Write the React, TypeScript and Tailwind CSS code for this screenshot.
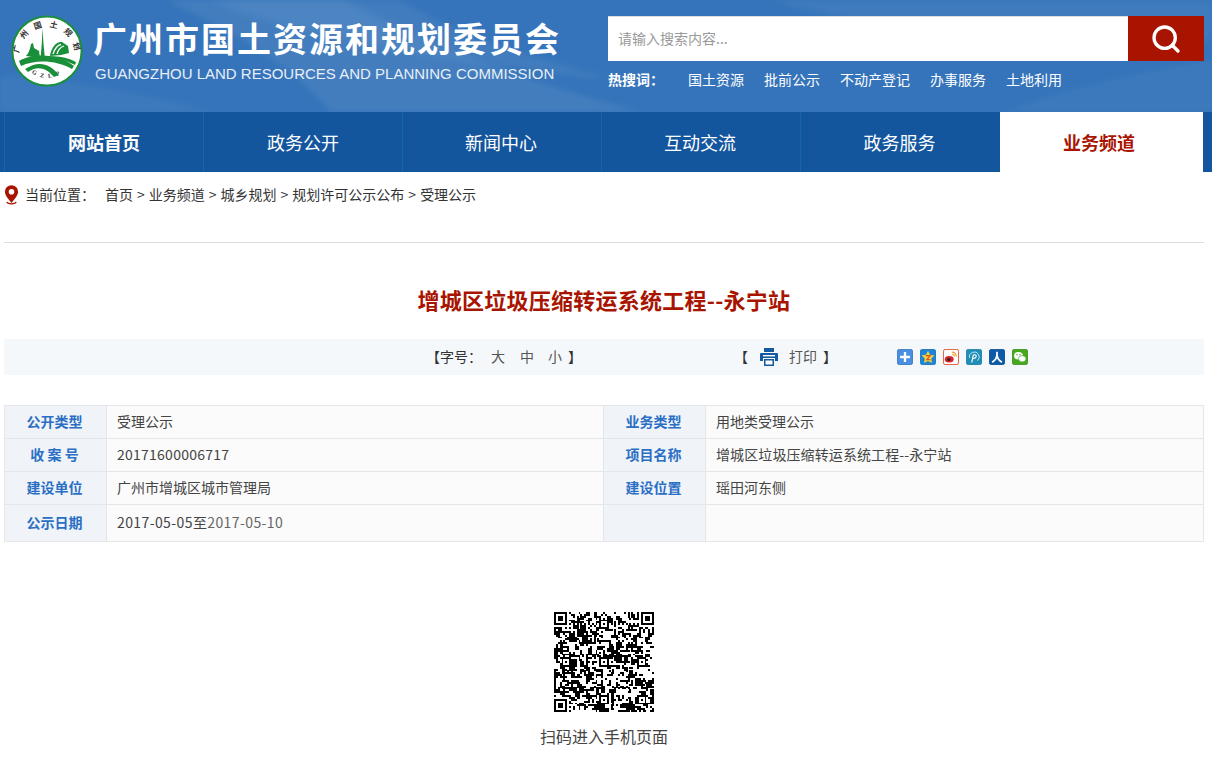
import { Search } from "lucide-react";
import type { ReactNode } from "react";

const cjk = "font-['Noto_Sans_CJK_SC','Liberation_Sans',sans-serif]";

const navItems = ["网站首页", "政务公开", "新闻中心", "互动交流", "政务服务"];
const hotWords = ["国土资源", "批前公示", "不动产登记", "办事服务", "土地利用"];
const crumbs = ["首页", "业务频道", "城乡规划", "规划许可公示公布", "受理公示"];

const QR_SIZE = 53;
const ALIGN = [6, 26, 46];

// seeded noise, a stand-in for the qr modules
const qrCells = () => {
  const cells: { x: number; y: number }[] = [];
  const grid: boolean[][] = [];
  let seed = 20170505;
  const next = () => {
    seed = (seed * 1103515245 + 12345) & 0x7fffffff;
    return (seed >> 16) % 100;
  };
  const inFinder = (x: number, y: number) =>
    (x < 8 && y < 8) || (x >= QR_SIZE - 8 && y < 8) || (x < 8 && y >= QR_SIZE - 8);
  for (let y = 0; y < QR_SIZE; y++) {
    grid[y] = [];
    for (let x = 0; x < QR_SIZE; x++) {
      let on = next() < 50;
      const roll = next();
      if (roll < 25 && x > 0) on = grid[y][x - 1];
      else if (roll < 50 && y > 0) on = grid[y - 1][x];
      if (y === 6) on = x % 2 === 0;
      if (x === 6) on = y % 2 === 0;
      grid[y][x] = on;
      if (!inFinder(x, y) && on) cells.push({ x, y });
    }
  }
  return cells;
};

const Finder = ({ x, y }: { x: number; y: number }) => (
  <g>
    <rect x={x} y={y} width="7" height="7" fill="#000" />
    <rect x={x + 1} y={y + 1} width="5" height="5" fill="#fff" />
    <rect x={x + 2} y={y + 2} width="3" height="3" fill="#000" />
  </g>
);

const QrCode = () => (
  <svg viewBox={`0 0 ${QR_SIZE} ${QR_SIZE}`} className="w-[100px] h-[100px]" shapeRendering="crispEdges">
    <rect width={QR_SIZE} height={QR_SIZE} fill="#fff" />
    {qrCells().map((c) => (
      <rect key={`${c.x}-${c.y}`} x={c.x} y={c.y} width="1.02" height="1.02" fill="#000" />
    ))}
    <Finder x={0} y={0} />
    <Finder x={46} y={0} />
    <Finder x={0} y={46} />
    {ALIGN.flatMap((ax) =>
      ALIGN.filter((ay) => !(ax === 6 && ay === 6) && !(ax === 46 && ay === 6) && !(ax === 6 && ay === 46)).map((ay) => (
        <g key={`${ax}-${ay}`}>
          <rect x={ax - 2} y={ay - 2} width="5" height="5" fill="#000" />
          <rect x={ax - 1} y={ay - 1} width="3" height="3" fill="#fff" />
          <rect x={ax} y={ay} width="1" height="1" fill="#000" />
        </g>
      ))
    )}
  </svg>
);

const Logo = () => (
  <svg viewBox="0 0 72 72" className="w-[72px] h-[72px] shrink-0">
    <defs>
      <path id="logoTop" d="M8 40 A28 28 0 0 1 64 40" />
      <path id="logoBottom" d="M13 50 A27 27 0 0 0 59 50" />
    </defs>
    <circle cx="36" cy="36" r="34.6" fill="#fff" stroke="#1a8f3a" strokeWidth="2" />
    <text fontSize="8" fontWeight="700" fill="#333" fontFamily="'Noto Sans CJK SC',sans-serif">
      <textPath href="#logoTop" startOffset="2%" textLength="82" lengthAdjust="spacing">
        广州国土规划
      </textPath>
    </text>
    <text fontSize="6" fontWeight="700" fill="#333" fontFamily="'Liberation Serif',serif">
      <textPath href="#logoBottom" startOffset="20%" textLength="30">
        GZLP
      </textPath>
    </text>
    {/* tower */}
    <path d="M29.5 44 L30.8 28 L31.6 13 L32.4 28 L34 44 Z" fill="#1a8f3a" />
    {/* left building */}
    <path d="M15 41 C18 38 19 34 20 29 L22 28 L23 33 L28 36 L29 43 Z" fill="#1a8f3a" />
    {/* right dome */}
    <path d="M39 41 C40 32 46 26 51 27 L57 31 L58 38 L50 40 Z" fill="#1a8f3a" />
    <path d="M42 39 C44 33 47 30 50 29.500" stroke="#fff" strokeWidth="1.300" fill="none" />
    <path d="M46 39 C47 35 50 32 53 31" stroke="#fff" strokeWidth="1.300" fill="none" />
    {/* fields */}
    <path d="M8 46 C20 39 44 37 63 51 L61 54 C46 45 24 44 10 51 Z" fill="#1a8f3a" />
    <path d="M14 54 C26 46 38 47 48 60 L43 62 C36 53 26 50 17 57 Z" fill="#1a8f3a" />
    <path d="M36 42 C44 40 56 42 65 47 L64 50 C54 45 44 43 36 42 Z" fill="#1a8f3a" />
  </svg>
);

const Printer = () => (
  <svg viewBox="0 0 20 20" className="w-5 h-5">
    <path d="M5 1h10v4H5z" fill="#15599f" />
    <path d="M2 6h16a1 1 0 0 1 1 1v7h-3v-3H4v3H1V7a1 1 0 0 1 1-1z" fill="#15599f" />
    <path d="M5 12h10v7H5z" fill="#15599f" />
    <path d="M6.500 13.500h7v4h-7z" fill="#fff" />
    <path d="M4 8h12v1.400H4z" fill="#fff" />
  </svg>
);

const ShareIcons = () => (
  <div className="flex gap-[7px]">
    <svg viewBox="0 0 18 18" className="w-4 h-4">
      <rect x="0.500" y="0.500" width="17" height="17" rx="2" fill="#4a90e2" stroke="#3d74c0" />
      <path d="M7.700 3.500h2.600v4.200h4.200v2.600h-4.200v4.200H7.700v-4.200H3.500V7.700h4.200z" fill="#fff" />
    </svg>
    <svg viewBox="0 0 18 18" className="w-4 h-4">
      <rect x="0.500" y="0.500" width="17" height="17" rx="2" fill="#1a86d8" stroke="#1a6fb8" />
      <path d="M9 2l2.200 4.600 5 .7-3.600 3.400.9 5L9 13.400l-4.500 2.300.9-5-3.600-3.400 5-.7z" fill="#f8cf3f" />
      <path d="M6.500 7.500h5L7.600 12h4" stroke="#d9531e" strokeWidth="1.300" fill="none" />
    </svg>
    <svg viewBox="0 0 18 18" className="w-4 h-4">
      <rect x="0.500" y="0.500" width="17" height="17" rx="2" fill="#fff" stroke="#e2491f" />
      <ellipse cx="7" cy="11.500" rx="5" ry="3.600" fill="#d8232a" />
      <circle cx="6.500" cy="11.800" r="1.800" fill="#222" />
      <path d="M10 3.500a4.800 4.800 0 0 1 5 5M10.500 6a2.300 2.300 0 0 1 2.400 2.400" stroke="#f39c1f" strokeWidth="1.300" fill="none" />
    </svg>
    <svg viewBox="0 0 18 18" className="w-4 h-4">
      <rect x="0.500" y="0.500" width="17" height="17" rx="2" fill="#1f8fb8" stroke="#1b7ea3" />
      <path d="M6.500 15L8 7.500c.3-1.500 3.500-1.500 3.500.5S9 11 8 10.500" stroke="#fff" strokeWidth="1.300" fill="none" />
      <path d="M4 10a5.500 5.500 0 1 1 9 3" stroke="#bfe6f2" strokeWidth="1.100" fill="none" />
    </svg>
    <svg viewBox="0 0 18 18" className="w-4 h-4">
      <rect x="0.500" y="0.500" width="17" height="17" rx="2" fill="#0c5aa8" stroke="#0b4d90" />
      <path d="M9 3v3c0 4-2 7-5.500 9M9 6c0 4 2 7 5.500 9" stroke="#fff" strokeWidth="2" fill="none" />
    </svg>
    <svg viewBox="0 0 18 18" className="w-4 h-4">
      <rect x="0.500" y="0.500" width="17" height="17" rx="2" fill="#46a81e" stroke="#3d9419" />
      <ellipse cx="7.300" cy="7.500" rx="5" ry="4.200" fill="#fff" />
      <ellipse cx="11.500" cy="11" rx="4.200" ry="3.500" fill="#fff" stroke="#46a81e" strokeWidth="0.700" />
      <circle cx="5.600" cy="6.500" r="0.800" fill="#46a81e" />
      <circle cx="9" cy="6.500" r="0.800" fill="#46a81e" />
    </svg>
  </div>
);

const Label = ({ children }: { children?: ReactNode }) => (
  <td className="bg-[#f0f4f9] border border-[#e4e6ea] pb-px pr-[2px] text-center font-bold text-[#2a6fc4] text-[14px]">
    {children}
  </td>
);

const Value = ({ children }: { children?: ReactNode }) => (
  <td className="bg-[#fbfbfb] border border-[#e4e6ea] pb-[2px] pl-[10px] text-[14px] text-[#444]">{children}</td>
);

export default function App() {
  return (
    <div className={`${cjk} bg-white min-h-[764px] text-[#333]`}>
      {/* === HEADER */}
      <header className="relative h-[112px] bg-[#3574ba] flex overflow-hidden">
        <svg viewBox="0 0 1212 112" className="absolute inset-0 w-full h-full blur-[3px]" preserveAspectRatio="none">
          <path d="M165 0H345C420 40 520 80 640 112H330C300 70 230 30 165 0Z" fill="#fff" fillOpacity="0.07" />
          <path d="M210 0H400C450 30 520 55 620 80C500 70 300 40 210 0Z" fill="#fff" fillOpacity="0.06" />
          <path d="M0 112V75C70 80 150 95 215 112Z" fill="#fff" fillOpacity="0.04" />
          <path d="M770 0H1212V40C1100 50 900 40 770 0Z" fill="#fff" fillOpacity="0.05" />
          <path d="M1000 112C1080 85 1150 70 1212 60V112Z" fill="#fff" fillOpacity="0.04" />
        </svg>
        <div className="relative w-[608px] shrink-0 flex pl-[11px] pt-[15px]">
          <Logo />
          <div className="ml-[10px]">
            <h1 className="text-[34px] leading-[46px] font-bold tracking-[2px] text-white whitespace-nowrap">
              广州市国土资源和规划委员会
            </h1>
            <p className="font-['Liberation_Sans',sans-serif] text-[15px] leading-[20px] mt-[3px] ml-[2px] text-[#e8eff8] whitespace-nowrap">
              GUANGZHOU LAND RESOURCES AND PLANNING COMMISSION
            </p>
          </div>
        </div>
        <div className="relative w-[596px] pt-4">
          <div className="flex h-[45px]">
            <div className="flex-1 bg-white border-t border-[#ddd] flex items-center pb-[2px] pl-[10px] text-[14px] text-[#999]">
              请输入搜索内容...
            </div>
            <div className="w-[76px] bg-[#a81400] flex items-center justify-center">
              <Search className="w-8 h-8 text-white" strokeWidth={2.5} />
            </div>
          </div>
          <div className="flex items-center mt-2 text-[14px] text-white h-5">
            <b className="w-[80px]">热搜词：</b>
            {hotWords.map((w) => (
              <span key={w} className="mr-5">
                {w}
              </span>
            ))}
          </div>
        </div>
      </header>

      {/* === NAV */}
      <nav className="h-[60px] bg-[#14569e] pl-1 flex">
        {navItems.map((item, i) => (
          <div
            key={item}
            className={`${i === 4 ? "w-[200px]" : "w-[199px]"} ${i >= 2 ? "pr-[2px]" : ""} flex items-center justify-center text-[18px] text-white border-l border-[#1467a8] ${
              i === 0 ? "font-bold" : ""
            }`}
          >
            {item}
          </div>
        ))}
        <div className="w-[203px] pr-[5px] bg-white flex items-center justify-center text-[18px] font-bold text-[#a81400]">
          业务频道
        </div>
      </nav>

      <main className="pl-1 w-[1204px]">
        {/* === BREADCRUMB */}
        <div className="h-[71px] border-b border-[#dcdcdc] flex items-start pt-[13px] text-[14px]">
          <svg viewBox="0 0 16 22" className="w-[15px] h-[21px] mr-[6px]">
            <path d="M8 0a7 7 0 0 1 7 7c0 4-4 8-7 12C5 15 1 11 1 7a7 7 0 0 1 7-7z" fill="#a81400" />
            <circle cx="8" cy="7" r="3" fill="#fff" />
            <path d="M3 18c1 2.500 9 2.500 10 0" stroke="#a81400" strokeWidth="1.300" fill="none" />
          </svg>
          <span className="leading-[18px]">当前位置：</span>
          <span className="leading-[18px] ml-[10px]">
            {crumbs.map((c, i) => (
              <span key={c}>
                {i > 0 && <span className="mx-[4px]">&gt;</span>}
                {c}
              </span>
            ))}
          </span>
        </div>

        <h2 className="text-[22px] leading-[30px] font-bold tracking-[0.25px] text-[#a81400] text-center mt-[41px]">
          增城区垃圾压缩转运系统工程--永宁站
        </h2>

        {/* === TOOL BAR */}
        <div className="h-9 mt-[25px] bg-[#f5f8fb] flex items-center text-[14px]">
          <span className="ml-[422px] w-[308px] pb-[2px] flex items-center">
            【字号：
            <span className="text-[#555] ml-[9px]">大</span>
            <span className="text-[#555] ml-[15px]">中</span>
            <span className="text-[#555] ml-[14px]">小</span>
            <span className="ml-[6px]">】</span>
          </span>
          <span className="flex items-center w-[163px]">
            <span className="pb-[2px]">【</span>
            <span className="ml-[11px] mr-[10px]"><Printer /></span>
            <span className="pb-[2px] text-[#555]">打印</span>
            <span className="pb-[2px] ml-[6px]">】</span>
          </span>
          <ShareIcons />
        </div>

        {/* === TABLE */}
        <table className="mt-[30px] w-[1199px] border-collapse table-fixed">
          <colgroup>
            <col className="w-[102px]" />
            <col className="w-[497px]" />
            <col className="w-[102px]" />
            <col className="w-[498px]" />
          </colgroup>
          <tbody>
            <tr className="h-[33px]">
              <Label>公开类型</Label>
              <Value>受理公示</Value>
              <Label>业务类型</Label>
              <Value>用地类受理公示</Value>
            </tr>
            <tr className="h-[33px]">
              <Label>收 案 号</Label>
              <Value>
                <span className="tracking-[0.25px]">20171600006717</span>
              </Value>
              <Label>项目名称</Label>
              <Value>
                <span className="tracking-[0.1px]">增城区垃圾压缩转运系统工程--永宁站</span>
              </Value>
            </tr>
            <tr className="h-[33px]">
              <Label>建设单位</Label>
              <Value>广州市增城区城市管理局</Value>
              <Label>建设位置</Label>
              <Value>瑶田河东侧</Value>
            </tr>
            <tr className="h-[37px]">
              <Label>公示日期</Label>
              <Value>
                <span className="tracking-[0.4px]">
                  2017-05-05至<span className="text-[#666]">2017-05-10</span>
                </span>
              </Value>
              <Label />
              <Value />
            </tr>
          </tbody>
        </table>

        {/* === QR */}
        <div className="mt-[70px] flex flex-col items-center">
          <QrCode />
          <p className="mt-[12px] text-[16px] leading-6 text-[#444]">扫码进入手机页面</p>
        </div>
      </main>
    </div>
  );
}
